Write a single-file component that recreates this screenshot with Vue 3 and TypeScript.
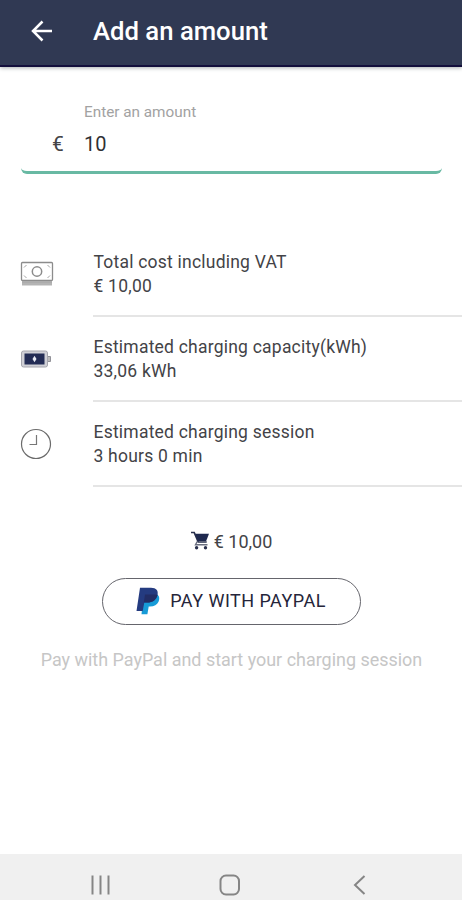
<script setup lang="ts">
import { ref, computed } from 'vue'

const amount = ref<string>('10')
const total = computed<string>(() => `€ ${Number(amount.value || 0).toFixed(2).replace('.', ',')}`)

interface Detail {
  icon: 'cash' | 'battery' | 'clock'
  label: string
  value: string
}

const details = computed<Detail[]>(() => [
  { icon: 'cash', label: 'Total cost including VAT', value: total.value },
  { icon: 'battery', label: 'Estimated charging capacity(kWh)', value: '33,06 kWh' },
  { icon: 'clock', label: 'Estimated charging session', value: '3 hours 0 min' },
])
</script>

<template>
  <div class="screen">
    <header class="bar">
      <button class="back" aria-label="Back">
        <svg width="24" height="24" viewBox="0 0 24 24">
          <path d="M22 12H3M12.500 2.500L3 12l9.500 9.500" fill="none" stroke="#fff" stroke-width="2.500" />
        </svg>
      </button>
      <h1>Add an amount</h1>
    </header>

    <main>
      <label class="field">
        <span class="currency">€</span>
        <span class="entry">
          <span class="hint">Enter an amount</span>
          <input v-model="amount" inputmode="decimal" />
        </span>
      </label>

      <ul class="details">
        <li v-for="item in details" :key="item.label">
          <span class="icon">
            <svg v-if="item.icon === 'cash'" width="34" height="26" viewBox="0 0 34 26">
              <rect x="1.500" y="1.500" width="31" height="18" rx="1" fill="#fff" stroke="#8c8c8c" stroke-width="1.300" />
              <circle cx="17" cy="10.500" r="4.700" fill="none" stroke="#8c8c8c" stroke-width="1.500" />
              <path d="M4 6.500L6.500 4M30 6.500L27.500 4M4 14.500L6.500 17M30 14.500L27.500 17" stroke="#a5a5a5" />
              <path d="M2 20.500h30v4H2z" fill="#b4b4b4" />
              <path d="M2 20.800h30" stroke="#959595" stroke-width=".8" />
            </svg>
            <svg v-else-if="item.icon === 'battery'" width="34" height="20" viewBox="0 0 34 20">
              <rect x="1.500" y="2" width="26" height="16" rx="2" fill="#d0d0d6" stroke="#a6a6ae" />
              <path d="M28 7.500h2.500v5H28" fill="#bbb" stroke="#929299" />
              <rect x="4.500" y="4.500" width="20" height="11" fill="#232c55" />
              <path d="M14.500 6.800l2 3.200-2 3.200-2-3.200z" fill="#e9ecf5" />
            </svg>
            <svg v-else width="34" height="34" viewBox="0 0 34 34">
              <circle cx="16" cy="17" r="14.500" fill="none" stroke="#6b6b6b" stroke-width="1.200" />
              <path d="M16.500 8v9.500H9.500" fill="none" stroke="#777" stroke-width="1.200" />
            </svg>
          </span>
          <div class="copy">
            <p>{{ item.label }}</p>
            <p class="value">{{ item.value }}</p>
          </div>
        </li>
      </ul>

      <div class="checkout">
        <div class="cart">
          <svg width="19" height="20" viewBox="0 0 19 20">
            <path d="M0 1.500h3.200l4 9.500h8.500" fill="none" stroke="#29304d" stroke-width="1.700" />
            <path d="M4 2.800h14l-2.800 7.200H6.800z" fill="#1f294f" />
            <path d="M6.200 10.500L4.500 13.700h12" fill="none" stroke="#6a6f80" stroke-width="1.400" />
            <circle cx="5.600" cy="16.800" r="1.700" fill="#29304d" />
            <circle cx="14.500" cy="16.800" r="1.700" fill="#29304d" />
          </svg>
          <span>{{ total }}</span>
        </div>
        <button class="pay">
          <svg width="24" height="28" viewBox="0 0 24 28">
            <path d="M7.500 7h13.200c3 1.900 3 5 1.800 7.800-1.400 3.200-4.300 4.700-8.500 4.700h-1.300L11.400 27.300H5.500z" fill="#179bd7" />
            <path d="M4 .7h11c5.400 0 7.500 3 6.500 7.300-1.200 5-5.100 7.600-10.200 7.600H8.300L6.700 24H.5z" fill="#243b80" />
            <path d="M9 7.500h10.500q1 0 2 .5c-1.200 5-5.100 7.600-10.200 7.600H7.800z" fill="#222d65" />
          </svg>
          <span>PAY WITH PAYPAL</span>
        </button>
        <p class="note">Pay with PayPal and start your charging session</p>
      </div>
    </main>

    <nav class="system">
      <svg width="22" height="22" viewBox="0 0 22 22">
        <path d="M2.500 1.500v19M10.500 1.500v19M18.500 1.500v19" stroke="#858585" stroke-width="2" />
      </svg>
      <svg width="22" height="22" viewBox="0 0 22 22">
        <rect x="1.500" y="1.500" width="18.500" height="19" rx="5.500" fill="none" stroke="#858585" stroke-width="2" />
      </svg>
      <svg width="22" height="22" viewBox="0 0 22 22">
        <path d="M16.500 2L7 11l9.500 9" fill="none" stroke="#858585" stroke-width="2" />
      </svg>
    </nav>
  </div>
</template>

<style>
body {
  background: #fff;
}
</style>

<style scoped>
.screen {
  width: 462px;
  height: 900px;
  display: flex;
  flex-direction: column;
  overflow: hidden;
  background: #fff;
  color: #434347;
  font-family: Roboto, "Liberation Sans", sans-serif;
}
h1, p, ul {
  margin: 0;
  padding: 0;
  font-weight: 400;
}
button {
  font: inherit;
  padding: 0;
  background: none;
  border: 0;
}
.bar {
  height: 67px;
  flex: none;
  box-sizing: border-box;
  display: flex;
  align-items: center;
  gap: 39px;
  padding: 0 0 4px 30px;
  background: #303953;
  border-bottom: 2px solid #130f3c;
  box-shadow: 0 1px 4px #a9b0b0;
}
.back {
  display: flex;
}
h1 {
  font-size: 25.700px;
  line-height: 30px;
  font-weight: 500;
  color: #fff;
  white-space: nowrap;
}
main {
  flex: 1;
}
.field {
  display: flex;
  align-items: flex-end;
  height: 72px;
  margin: 32px 20px 0 21px;
  border-bottom: 3px solid #68b9a3;
  border-radius: 0 0 6px 6px;
}
.currency {
  width: 63px;
  padding: 0 0 14px 31px;
  box-sizing: border-box;
  font-size: 21px;
  line-height: 26px;
}
.entry {
  display: flex;
  flex-direction: column;
  padding-bottom: 14px;
}
.hint {
  font-size: 15.300px;
  line-height: 20px;
  color: #a2a2a2;
}
input {
  width: 300px;
  height: 26px;
  margin-top: 9px;
  padding: 0;
  border: 0;
  outline: 0;
  background: none;
  color: #303034;
  font: 20px/26px Roboto, sans-serif;
}
.details {
  list-style: none;
  margin-top: 58px;
}
.details li {
  display: flex;
  height: 85px;
}
.icon {
  width: 93px;
  box-sizing: border-box;
  padding: 0 0 2px 20px;
  display: flex;
  align-items: center;
}
.copy {
  flex: 1;
  box-sizing: border-box;
  padding: 18px 0 0 0.500px;
  border-bottom: 2px solid #e5e5e5;
  font-size: 17.500px;
  line-height: 24px;
  letter-spacing: 0.220px;
}
.checkout {
  display: flex;
  flex-direction: column;
  align-items: center;
}
.cart {
  display: flex;
  align-items: center;
  gap: 4px;
  height: 24px;
  margin-top: 42px;
  padding-left: 1px;
  font-size: 18px;
}
.pay {
  display: flex;
  align-items: center;
  justify-content: center;
  gap: 10px;
  width: 259px;
  height: 47px;
  margin-top: 25px;
  padding-bottom: 2px;
  border: 1.500px solid #65656c;
  border-radius: 24px;
  color: #25253a;
  font-size: 18px;
  letter-spacing: 0.480px;
}
.note {
  margin-top: 23px;
  padding-left: 1px;
  font-size: 17.950px;
  line-height: 24px;
  color: #c6c6c6;
  white-space: nowrap;
}
.system {
  height: 46px;
  flex: none;
  box-sizing: border-box;
  display: flex;
  justify-content: space-between;
  padding: 20px 92px 0 90px;
  background: #f0f0f0;
}
</style>
